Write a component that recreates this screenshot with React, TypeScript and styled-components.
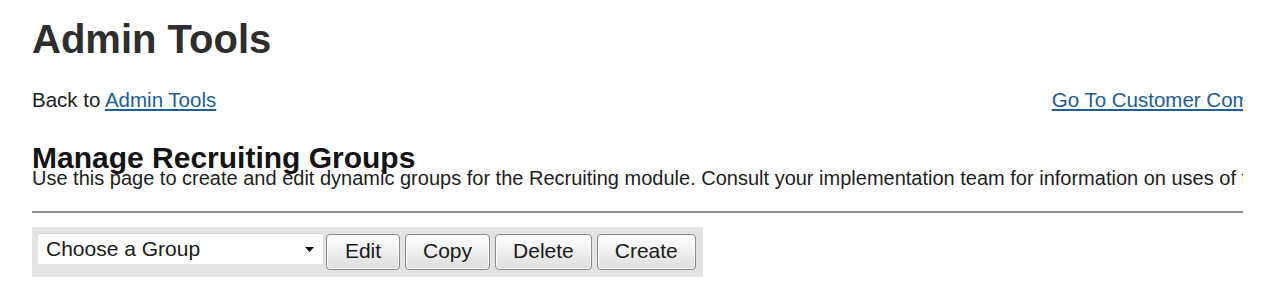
import React from "react";
import styled, { createGlobalStyle } from "styled-components";

const Global = createGlobalStyle`
  html, body { margin: 0; padding: 0; background: #ffffff; }
  body { font-family: "Liberation Sans", Arial, sans-serif; color: #222; }
`;

const Page = styled.div`
  padding-left: 32px;
  width: 1211px;
  overflow: hidden;
`;

const Title = styled.h1`
  margin: 17px 0 0 0;
  font-size: 40px;
  line-height: 45px;
  font-weight: bold;
  color: #2e2e2e;
  white-space: nowrap;
`;

const NavRow = styled.div`
  display: flex;
  justify-content: space-between;
  width: 1278px;
  margin-top: 26px;
  font-size: 20.5px;
  line-height: 23px;
  white-space: nowrap;
`;

const Link = styled.a`
  color: #215d96;
  text-decoration: underline;
`;

const SectionTitle = styled.h2`
  margin: 34px 0 0 0;
  font-size: 30px;
  line-height: 25px;
  font-weight: bold;
  color: #141414;
  white-space: nowrap;
`;

const Description = styled.p`
  margin: 0;
  font-size: 20px;
  line-height: 16px;
  white-space: nowrap;
  color: #1e1e1e;
`;

const Rule = styled.div`
  margin-top: 25px;
  height: 0;
  border-top: 2px solid #8c8c8c;
`;

const Toolbar = styled.div`
  display: inline-flex;
  align-items: flex-start;
  margin-top: 14px;
  padding: 6px 7px 7px 6px;
  background: #e3e3e3;
`;

const Select = styled.div`
  display: flex;
  align-items: center;
  justify-content: space-between;
  box-sizing: border-box;
  width: 285px;
  height: 31px;
  padding: 0 9px 0 8px;
  background: #ffffff;
  border-top: 1px solid #d4d4d4;
  font-size: 21px;
  line-height: 30px;
  color: #1a1a1a;
`;

const Button = styled.button<{ $first?: boolean }>`
  box-sizing: border-box;
  height: 36px;
  min-width: ${(p) => (p.$first ? "74px" : "0")};
  margin: 1px 0 0 ${(p) => (p.$first ? "3px" : "5px")};
  padding: 0 17px 2px 17px;
  font-family: "Liberation Sans", Arial, sans-serif;
  font-size: 21px;
  line-height: 32px;
  color: #1a1a1a;
  background: linear-gradient(#fdfdfd, #f0f0f0 45%, #dedede);
  border: 1px solid #8a8a8a;
  border-radius: 4px;
  box-shadow: inset 0 0 0 1px #ffffff;
  cursor: pointer;
`;

const Arrow = () => (
  <svg width="9" height="5" viewBox="0 0 9 5">
    <path d="M0 0 L9 0 L4.5 5 Z" fill="#111" />
  </svg>
);

export default function App() {
  return (
    <>
      <Global />
      <Page>
        <Title>Admin Tools</Title>
        <NavRow>
          <span>
            Back to <Link href="#">Admin Tools</Link>
          </span>
          <Link href="#">Go To Customer Community</Link>
        </NavRow>
        <SectionTitle>Manage Recruiting Groups</SectionTitle>
        <Description>
          Use this page to create and edit dynamic groups for the Recruiting module. Consult your
          implementation team for information on uses of these groups.
        </Description>
        <Rule />
        <Toolbar>
          <Select>
            <span>Choose a Group</span>
            <Arrow />
          </Select>
          <Button $first>Edit</Button>
          <Button>Copy</Button>
          <Button>Delete</Button>
          <Button>Create</Button>
        </Toolbar>
      </Page>
    </>
  );
}
